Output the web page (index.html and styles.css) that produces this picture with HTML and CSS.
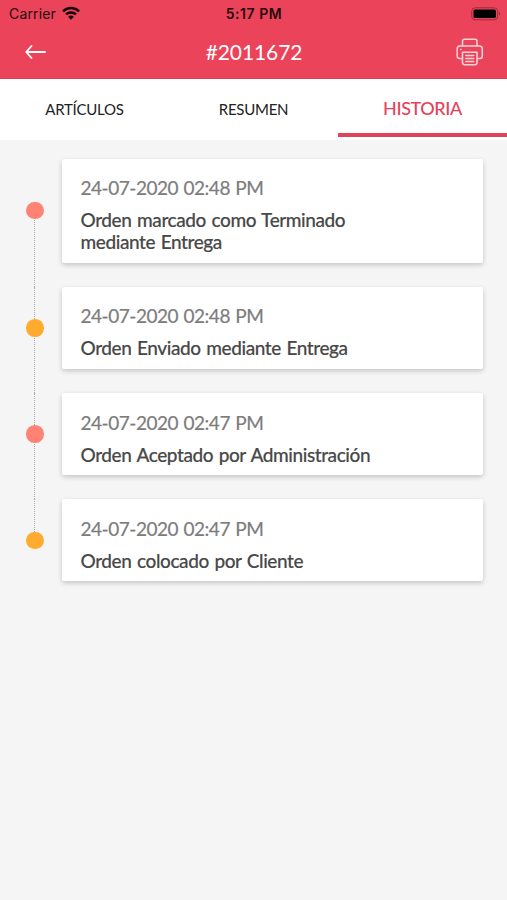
FILE: index.html
```html
<!DOCTYPE html>
<html lang="es">
<head>
<meta charset="utf-8">
<title>#2011672</title>
<link rel="stylesheet" href="styles.css">
</head>
<body>
<header class="header">
  <div class="status">
    <div class="carrier"><span class="carrier-name">Carrier</span>
      <svg class="wifi" width="18" height="14" viewBox="0 0 18 14" fill="none" stroke="#160508" stroke-width="2.5"><path d="M1 5.3C5.5.9 12.500.9 17 5.300M4 8.400C6.800 5.700 11.200 5.700 14 8.400"/><path d="M9 13.700L6.100 10.700Q9 8.300 11.900 10.700Z" fill="#160508" stroke="none"/></svg>
    </div>
    <div class="clock">5:17 PM</div>
    <svg class="battery" width="30" height="14" viewBox="0 0 30 14"><rect x=".7" y=".8" width="26" height="12" rx="3.500" fill="none" stroke="#9b2c3c"/><rect x="2.500" y="2.600" width="22.400" height="8.400" rx="1.500" fill="#000"/><path d="M28 4.800Q30 6.800 28 8.800Z" fill="#8b2635"/></svg>
  </div>
  <div class="bar">
    <svg class="back" width="22" height="16" viewBox="0 0 22 16" fill="none" stroke="#fff" stroke-width="1.800" stroke-linecap="round" stroke-linejoin="round"><path d="M20 8H1.500M6.500 2L1.200 8L6.500 14"/></svg>
    <h1 class="title">#2011672</h1>
    <svg class="print" width="28" height="28" viewBox="0 0 28 28" fill="none" stroke="#fbd3d9" stroke-width="1.500" stroke-linejoin="round" stroke-linecap="round"><path d="M6.500 8V3.200Q6.500 1.200 8.500 1.200H19Q21 1.200 21 3.200V8M6.500 20.500H3.500Q1.200 20.500 1.200 18V11Q1.200 8 4 8H23.500Q26.300 8 26.300 11V18Q26.300 20.500 24 20.500H21M6.500 14.200H21V24.500Q21 26.700 19 26.700H8.500Q6.500 26.700 6.500 24.500ZM9.800 17.500H17.700M9.800 20.500H17.700M9.800 23.500H17.700M4.700 11.500H5"/></svg>
  </div>
</header>
<nav class="tabs">
  <a class="tab">ARTÍCULOS</a>
  <a class="tab">RESUMEN</a>
  <a class="tab active">HISTORIA</a>
</nav>
<main class="timeline">
  <section class="event">
    <span class="dot coral"></span>
    <article class="card"><time class="date">24-07-2020 02:48 PM</time><p class="text">Orden marcado como Terminado<br>mediante Entrega</p></article>
  </section>
  <section class="event">
    <span class="dot amber"></span>
    <article class="card"><time class="date">24-07-2020 02:48 PM</time><p class="text">Orden Enviado mediante Entrega</p></article>
  </section>
  <section class="event">
    <span class="dot coral"></span>
    <article class="card"><time class="date">24-07-2020 02:47 PM</time><p class="text">Orden Aceptado por Administración</p></article>
  </section>
  <section class="event">
    <span class="dot amber"></span>
    <article class="card"><time class="date">24-07-2020 02:47 PM</time><p class="text">Orden colocado por Cliente</p></article>
  </section>
</main>
</body>
</html>
```
FILE: styles.css
```css
* { box-sizing: border-box; }
body { margin: 0; min-height: 900px; background: #f5f5f5; font-family: Lato, sans-serif; }
.header { height: 79px; background: #eb445a; border-bottom: 1px solid #e04054; }
.status { height: 27px; padding: 0 6px 0 9px; display: grid; grid-template-columns: 1fr auto 1fr; align-items: center; font-family: Inter, sans-serif; color: #260b0f; }
.carrier { display: flex; align-items: center; gap: 6px; font-size: 14px; letter-spacing: .15px; }
.wifi { margin-top: -2px; }
.clock { margin-left: -2px; font-size: 14px; font-weight: 600; letter-spacing: .55px; }
.battery { justify-self: end; }
.bar { height: 50px; padding: 0 23px 0 25px; display: grid; grid-template-columns: 1fr auto 1fr; align-items: center; }
.title { margin: -2px 0 0 -1px; font-size: 21px; font-weight: 400; letter-spacing: -.1px; color: #fff; }
.print { justify-self: end; }
.tabs { height: 61px; display: grid; grid-template-columns: repeat(3, 1fr); background: #fff; }
.tab { height: 58px; display: flex; align-items: center; justify-content: center; font-size: 15px; letter-spacing: -.25px; color: #222; border-bottom: 4px solid transparent; padding-top: 5px; }
.active { font-size: 18px; font-weight: 500; letter-spacing: -.4px; color: #e64258; border-color: #e0435a; padding-top: 4px; }
.timeline { padding: 18.500px 24px 0 26px; display: flex; flex-direction: column; gap: 24.300px; }
.event { position: relative; display: grid; grid-template-columns: 18px 1fr; column-gap: 18px; align-items: center; }
.event::before { content: ""; position: absolute; left: 8px; top: 0; bottom: -24.300px; border-left: 1px dotted #aaa; }
.event:first-child::before { top: 50%; }
.event:last-child::before { bottom: 50%; }
.dot { position: relative; width: 17.500px; height: 17.500px; border-radius: 50%; }
.coral { background: #ff8375; }
.amber { background: #ffab2e; }
.card { padding: 17.500px 19px 9.500px 18.500px; background: #fff; border-radius: 2px; box-shadow: 0 2px 5px rgba(0,0,0,.2); }
.date { display: block; font-size: 19px; line-height: 23px; letter-spacing: -.47px; word-spacing: 1px; color: #7c7c7c; -webkit-text-stroke: .2px #7c7c7c; }
.text { margin: 10px 0 0; font-size: 19px; line-height: 22px; font-weight: 500; letter-spacing: -.42px; word-spacing: 1.200px; color: #484848; -webkit-text-stroke: .15px #484848; }
```
